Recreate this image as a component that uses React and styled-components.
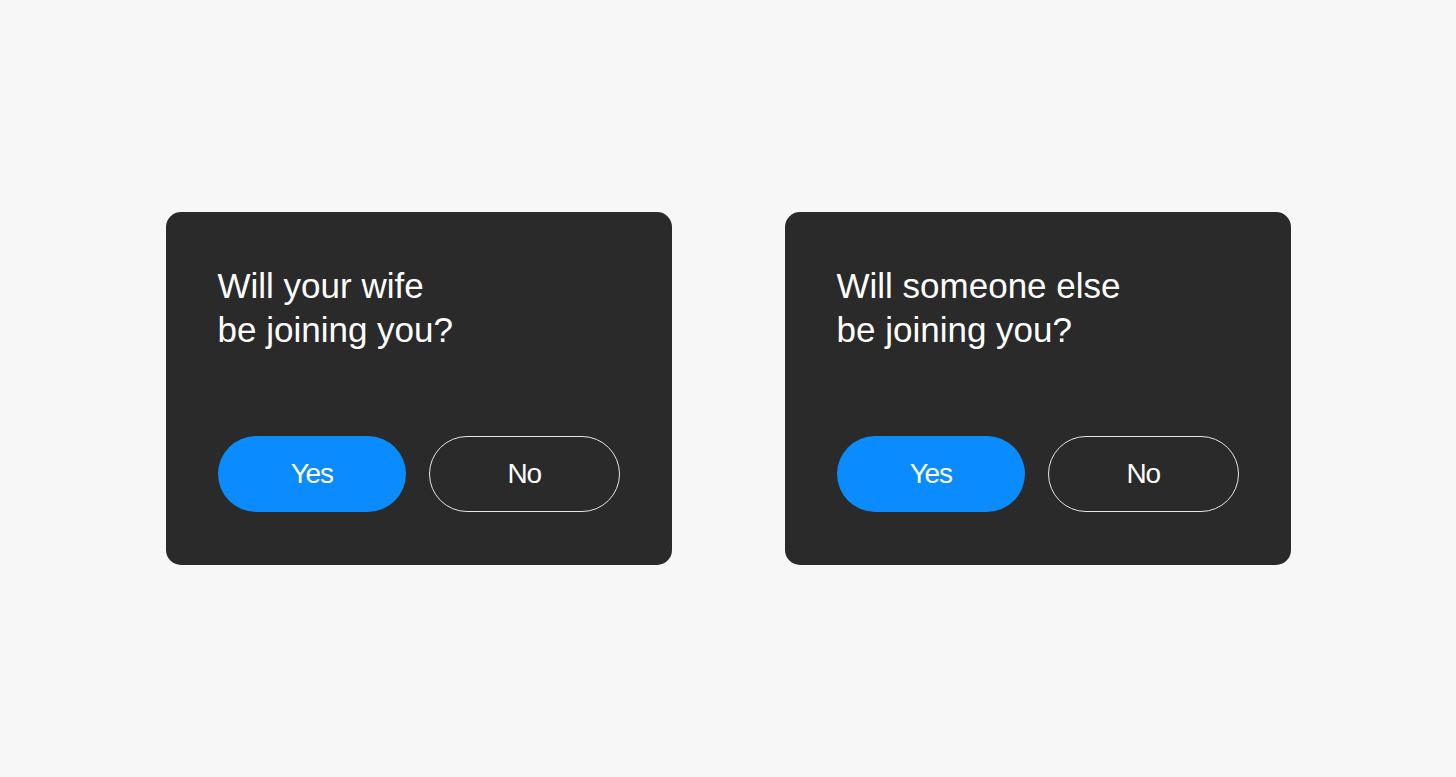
import styled, { createGlobalStyle } from "styled-components";

const GlobalStyle = createGlobalStyle`
  html, body {
    margin: 0;
    padding: 0;
    background: #f7f7f7;
  }
  #root {
    min-height: 100vh;
  }
`;

const Page = styled.div`
  height: 777px;
  display: flex;
  justify-content: center;
  align-items: center;
  gap: 113px;
  font-family: "Liberation Sans", Arial, sans-serif;
`;

const Card = styled.div`
  box-sizing: border-box;
  width: 506px;
  height: 353px;
  padding: 52px 52px 53px;
  border-radius: 15px;
  background: #2a2a2a;
  display: flex;
  flex-direction: column;
  justify-content: space-between;
`;

const Question = styled.div`
  color: #ffffff;
  font-size: 35px;
  line-height: 44px;
  letter-spacing: 0;
`;

const Actions = styled.div`
  display: flex;
  gap: 23px;
`;

const Button = styled.button`
  flex: 1;
  height: 76px;
  border-radius: 38px;
  font-family: inherit;
  font-size: 28px;
  letter-spacing: -1.2px;
  color: #ffffff;
  cursor: pointer;
  background: ${(p) => (p.$primary ? "#0a8bff" : "transparent")};
  border: ${(p) => (p.$primary ? "none" : "1.2px solid #e6e6e6")};
`;

const PromptCard = ({ lines }) => (
  <Card>
    <Question>
      {lines.map((l) => (
        <div key={l}>{l}</div>
      ))}
    </Question>
    <Actions>
      <Button $primary>Yes</Button>
      <Button>No</Button>
    </Actions>
  </Card>
);

export default function App() {
  return (
    <>
      <GlobalStyle />
      <Page>
        <PromptCard lines={["Will your wife", "be joining you?"]} />
        <PromptCard lines={["Will someone else", "be joining you?"]} />
      </Page>
    </>
  );
}
